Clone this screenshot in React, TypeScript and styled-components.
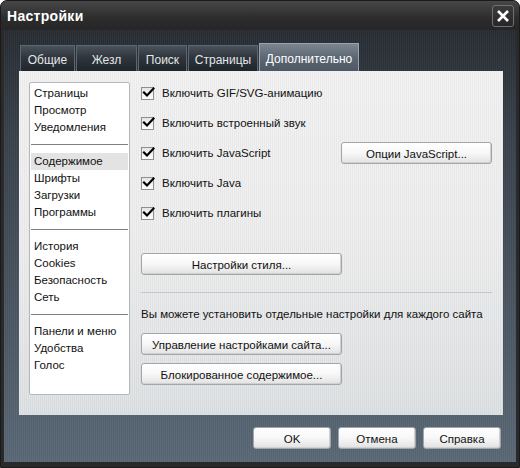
import { FC } from 'react'
import styled, { createGlobalStyle, css } from 'styled-components'

const Global = createGlobalStyle`
  html, body { margin: 0; padding: 0; background: #ffffff; }
  body { font-family: "Liberation Sans", Arial, sans-serif; font-size: 11px; }
`

const stripes = 'repeating-linear-gradient(90deg, rgba(255,255,255,0.035) 0 1px, rgba(0,0,0,0.035) 1px 2px)'

const Window = styled.div`
  width: 520px;
  height: 468px;
  box-sizing: border-box;
  display: flex;
  flex-direction: column;
  background: #2a2a2a;
  border: 1px solid #1a1a1a;
  border-radius: 7px 7px 0 0;
  overflow: hidden;
`

const TitleBar = styled.div`
  height: 29px;
  flex: none;
  display: flex;
  align-items: center;
  justify-content: space-between;
  padding: 0 5px 0 6px;
  background: linear-gradient(#474747, #2c2c2c 60%, #262626);
`

const Title = styled.div`
  color: #ffffff;
  font-weight: bold;
  font-size: 14px;
  letter-spacing: 0.3px;
`

const CloseButton = styled.div`
  width: 20px;
  height: 20px;
  border: 1px solid #707070;
  border-radius: 3px;
  background: linear-gradient(#3c3c3c, #262626);
  display: flex;
  align-items: center;
  justify-content: center;
`

const Body = styled.div`
  flex: 1;
  margin: 0 3px 5px 3px;
  background: ${stripes}, linear-gradient(#272c32, #39424c 25%, #4c5864 70%, #5a6876);
  padding: 13px 0 0 14px;
  display: flex;
  flex-direction: column;
`

const TabBar = styled.div`
  display: flex;
  align-items: flex-end;
  padding-left: 2px;
  height: 28px;
`

const Tab = styled.div<{ $active?: boolean; $w: number }>`
  width: ${p => p.$w}px;
  height: 26px;
  box-sizing: border-box;
  margin-right: 1px;
  display: flex;
  align-items: center;
  justify-content: center;
  padding-top: 3px;
  font-size: 12px;
  color: #e4e6e8;
  border: 1px solid #5d6771;
  border-bottom: none;
  background: linear-gradient(#4a525b, #2f363d 45%, #1f252b);
  ${p => p.$active && css`
    height: 28px;
    color: #ffffff;
    border-color: #9aa4ae;
    background: linear-gradient(#7b8691, #5c6773 50%, #4d5864);
  `}
`

const Panel = styled.div`
  width: 484px;
  height: 344px;
  margin-left: 1px;
  box-sizing: border-box;
  background: ${stripes}, linear-gradient(#f3f3f3, #eeeeee 50%, #dfe2e4);
  display: flex;
  padding: 11px 0 0 10px;
  gap: 11px;
`

const SideList = styled.div`
  width: 101px;
  height: 313px;
  box-sizing: border-box;
  background: #ffffff;
  border: 1px solid #b4b8bc;
  border-radius: 2px;
  padding: 2px 1px;
  display: flex;
  flex-direction: column;
`

const SideItem = styled.div<{ $selected?: boolean }>`
  height: 17px;
  line-height: 17px;
  padding-left: 3px;
  font-size: 11.5px;
  color: #111;
  background: ${p => (p.$selected ? '#e3e3e3' : 'transparent')};
`

const SideRule = styled.div`
  height: 1px;
  background: #808080;
  margin: 8px 0 8px 0;
`

const Main = styled.div`
  width: 351px;
  display: flex;
  flex-direction: column;
  margin-top: -4px;
`

const CheckRow = styled.div`
  height: 30px;
  display: flex;
  align-items: center;
`

const Box = styled.div`
  width: 13px;
  height: 13px;
  box-sizing: border-box;
  border: 1px solid #8c9095;
  background: linear-gradient(#e4e4e4, #ffffff);
  margin-right: 8px;
  position: relative;
`

const CheckLabel = styled.span`
  flex: 1;
  font-size: 11.5px;
  color: #111;
`

const Button = styled.div<{ $w: number }>`
  width: ${p => p.$w}px;
  height: 22px;
  box-sizing: border-box;
  border: 1px solid #a2a6aa;
  border-radius: 3px;
  background: linear-gradient(#ffffff, #f7f7f7 50%, #e2e2e2);
  box-shadow: inset -1px -1px 0 #d0d0d0;
  display: flex;
  align-items: center;
  justify-content: center;
  font-size: 11.5px;
  color: #111;
  padding-top: 1px;
`

const StyleButtonWrap = styled.div`
  margin-top: 25px;
`

const Rule = styled.div`
  height: 1px;
  background: #c4c6c8;
  margin: 17px 0 14px 0;
`

const Note = styled.div`
  color: #111;
  height: 14px;
  line-height: 14px;
  font-size: 11.5px;
  white-space: nowrap;
  margin-bottom: 12px;
`

const ButtonStack = styled.div`
  display: flex;
  flex-direction: column;
  gap: 8px;
`

const Footer = styled.div`
  display: flex;
  justify-content: flex-end;
  gap: 7px;
  padding: 12px 15px 0 0;
`

const Check: FC = () => (
  <Box>
    <svg width="13" height="13" viewBox="0 0 13 13" style={{ position: 'absolute', left: 0, top: -2 }}>
      <path d="M2 6.5 L5 9.5 L11.5 2.5" fill="none" stroke="#000" strokeWidth="2.2" strokeLinecap="square" />
    </svg>
  </Box>
)

const checks = [
  'Включить GIF/SVG-анимацию',
  'Включить встроенный звук',
  'Включить JavaScript',
  'Включить Java',
  'Включить плагины',
]

export default function App() {
  return (
    <>
      <Global />
      <Window>
        <TitleBar>
          <Title>Настройки</Title>
          <CloseButton>
            <svg width="14" height="14" viewBox="0 0 14 14">
              <path d="M2 2 L12 12 M12 2 L2 12" stroke="#fff" strokeWidth="2.6" />
            </svg>
          </CloseButton>
        </TitleBar>
        <Body>
          <TabBar>
            <Tab $w={55}>Общие</Tab>
            <Tab $w={61}>Жезл</Tab>
            <Tab $w={49}>Поиск</Tab>
            <Tab $w={70}>Страницы</Tab>
            <Tab $w={100} $active>Дополнительно</Tab>
          </TabBar>
          <Panel>
            <SideList>
              <SideItem>Страницы</SideItem>
              <SideItem>Просмотр</SideItem>
              <SideItem>Уведомления</SideItem>
              <SideRule />
              <SideItem $selected>Содержимое</SideItem>
              <SideItem>Шрифты</SideItem>
              <SideItem>Загрузки</SideItem>
              <SideItem>Программы</SideItem>
              <SideRule />
              <SideItem>История</SideItem>
              <SideItem>Cookies</SideItem>
              <SideItem>Безопасность</SideItem>
              <SideItem>Сеть</SideItem>
              <SideRule />
              <SideItem>Панели и меню</SideItem>
              <SideItem>Удобства</SideItem>
              <SideItem>Голос</SideItem>
            </SideList>
            <Main>
              {checks.map(c => (
                <CheckRow key={c}>
                  <Check />
                  <CheckLabel>{c}</CheckLabel>
                  {c === 'Включить JavaScript' && <Button $w={151}>Опции JavaScript...</Button>}
                </CheckRow>
              ))}
              <StyleButtonWrap>
                <Button $w={201}>Настройки стиля...</Button>
              </StyleButtonWrap>
              <Rule />
              <Note>Вы можете установить отдельные настройки для каждого сайта</Note>
              <ButtonStack>
                <Button $w={201}>Управление настройками сайта...</Button>
                <Button $w={201}>Блокированное содержимое...</Button>
              </ButtonStack>
            </Main>
          </Panel>
          <Footer>
            <Button $w={78}>OK</Button>
            <Button $w={78}>Отмена</Button>
            <Button $w={78}>Справка</Button>
          </Footer>
        </Body>
      </Window>
    </>
  )
}
